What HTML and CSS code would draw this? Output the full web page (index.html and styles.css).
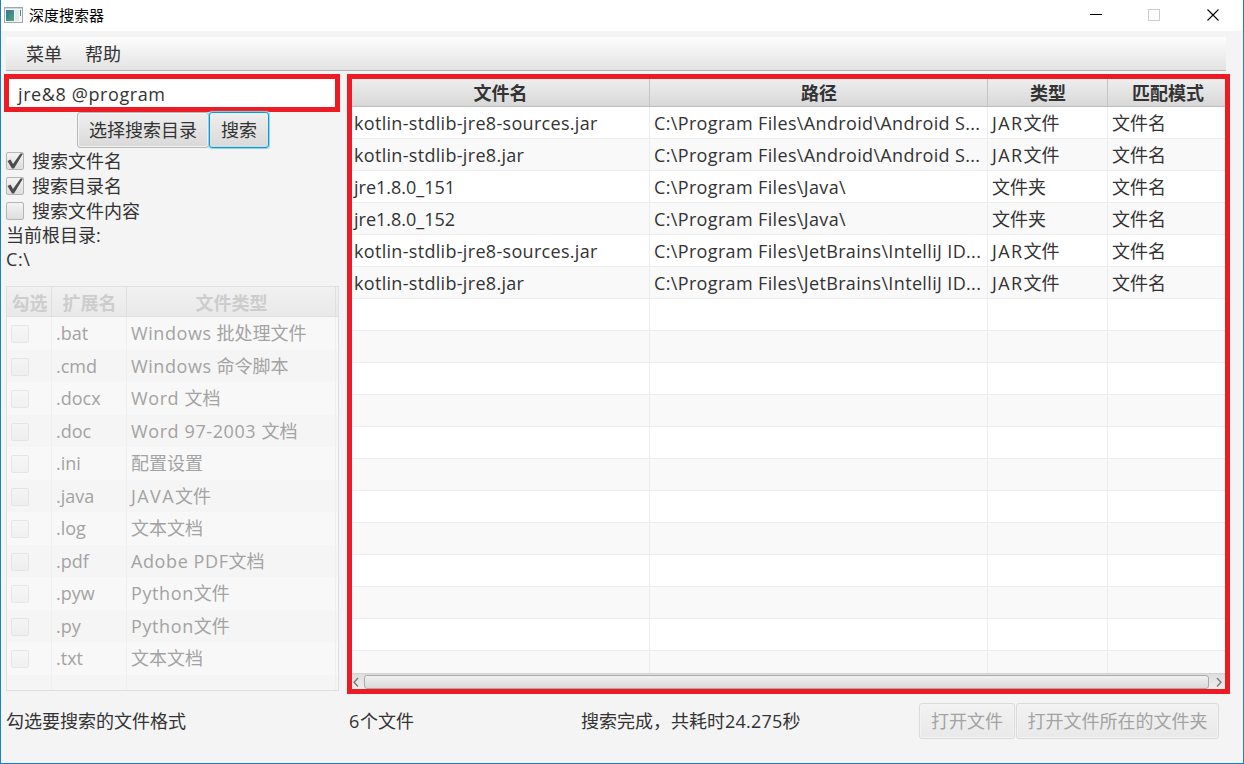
FILE: index.html
```html
<!DOCTYPE html>
<html lang="zh-CN">
<head>
<meta charset="utf-8">
<title>深度搜索器</title>
<link rel="stylesheet" href="styles.css">
</head>
<body>
<div class="window">
  <header class="titlebar">
    <svg class="app-icon" width="19" height="16" viewBox="0 0 19 16">
      <defs><linearGradient id="g" x1="0" y1="0" x2="1" y2="1"><stop offset="0" stop-color="#3c6f9c"/><stop offset="1" stop-color="#49ac78"/></linearGradient></defs>
      <rect x=".5" y=".5" width="18" height="15" fill="#f6f8f8" stroke="#a3a8ae"/>
      <path d="M1 1.500h17" stroke="#d5d8dc"/>
      <rect x="2" y="3" width="8" height="11" fill="url(#g)"/>
      <rect x="11" y="3" width="4" height="11" fill="#e3ebec"/>
      <rect x="16" y="3" width="1" height="6" fill="#4a8c9c"/>
    </svg>
    <span class="title">深度搜索器</span>
    <svg class="controls" width="132" height="14" viewBox="0 0 132 14" fill="none">
      <path d="M0 6.500h12" stroke="#000"/>
      <rect x="58.500" y="1.500" width="11" height="11" stroke="#ccc"/>
      <path d="M117.500 1.500l11 11M128.500 1.500l-11 11" stroke="#000" stroke-width="1.100"/>
    </svg>
  </header>
  <nav class="menubar"><span>菜单</span><span>帮助</span></nav>
  <main class="content">
    <section class="side">
      <div class="search">jre&amp;8 @program</div>
      <div class="actions"><button class="btn pick">选择搜索目录</button><button class="btn focus">搜索</button></div>
      <div class="checks">
        <div class="check"><i class="box"><svg width="18" height="18" viewBox="0 0 18 18"><path d="M1.500 9l3-1.500 2.500 4.500L14.500 1.500h2.500L8 16.500H6z" fill="#4d4d4d"/></svg></i>搜索文件名</div>
        <div class="check"><i class="box"><svg width="18" height="18" viewBox="0 0 18 18"><path d="M1.500 9l3-1.500 2.500 4.500L14.500 1.500h2.500L8 16.500H6z" fill="#4d4d4d"/></svg></i>搜索目录名</div>
        <div class="check"><i class="box"></i>搜索文件内容</div>
      </div>
      <div class="root">当前根目录:</div>
      <div class="root drive">C:\</div>
      <div class="types">
        <div class="trow thead"><b>勾选</b><b>扩展名</b><b>文件类型</b><b></b></div>
        <div class="trow"><span><i class="box"></i></span><span>.bat</span><span><em>Windows</em> 批处理文件</span></div>
        <div class="trow"><span><i class="box"></i></span><span>.cmd</span><span><em>Windows</em> 命令脚本</span></div>
        <div class="trow"><span><i class="box"></i></span><span>.docx</span><span><em>Word </em>文档</span></div>
        <div class="trow"><span><i class="box"></i></span><span>.doc</span><span><em>Word 97-2003 </em>文档</span></div>
        <div class="trow"><span><i class="box"></i></span><span>.ini</span><span>配置设置</span></div>
        <div class="trow"><span><i class="box"></i></span><span>.java</span><span><em class="caps">JAVA</em>文件</span></div>
        <div class="trow"><span><i class="box"></i></span><span>.log</span><span>文本文档</span></div>
        <div class="trow"><span><i class="box"></i></span><span>.pdf</span><span><em>Adobe PDF</em>文档</span></div>
        <div class="trow"><span><i class="box"></i></span><span>.pyw</span><span><em>Python</em>文件</span></div>
        <div class="trow"><span><i class="box"></i></span><span>.py</span><span><em>Python</em>文件</span></div>
        <div class="trow"><span><i class="box"></i></span><span>.txt</span><span>文本文档</span></div>
        <div class="trow"><span></span><span></span><span></span></div>
      </div>
    </section>
    <section class="results">
      <div class="rrow rhead"><b>文件名</b><b>路径</b><b>类型</b><b>匹配模式</b></div>
      <div class="rbody">
        <div class="rrow"><span class="name">kotlin-stdlib-jre8-sources.jar</span><span class="path">C:\Program Files\Android\Android S...</span><span><em class="caps">JAR</em>文件</span><span>文件名</span></div>
        <div class="rrow"><span class="name">kotlin-stdlib-jre8.jar</span><span class="path">C:\Program Files\Android\Android S...</span><span><em class="caps">JAR</em>文件</span><span>文件名</span></div>
        <div class="rrow"><span>jre1.8.0_151</span><span class="path">C:\Program Files\Java\</span><span>文件夹</span><span>文件名</span></div>
        <div class="rrow"><span>jre1.8.0_152</span><span class="path">C:\Program Files\Java\</span><span>文件夹</span><span>文件名</span></div>
        <div class="rrow"><span class="name">kotlin-stdlib-jre8-sources.jar</span><span class="path">C:\Program Files\JetBrains\IntelliJ ID...</span><span><em class="caps">JAR</em>文件</span><span>文件名</span></div>
        <div class="rrow"><span class="name">kotlin-stdlib-jre8.jar</span><span class="path">C:\Program Files\JetBrains\IntelliJ ID...</span><span><em class="caps">JAR</em>文件</span><span>文件名</span></div>
        <div class="rrow"><span></span><span></span><span></span><span></span></div>
        <div class="rrow"><span></span><span></span><span></span><span></span></div>
        <div class="rrow"><span></span><span></span><span></span><span></span></div>
        <div class="rrow"><span></span><span></span><span></span><span></span></div>
        <div class="rrow"><span></span><span></span><span></span><span></span></div>
        <div class="rrow"><span></span><span></span><span></span><span></span></div>
        <div class="rrow"><span></span><span></span><span></span><span></span></div>
        <div class="rrow"><span></span><span></span><span></span><span></span></div>
        <div class="rrow"><span></span><span></span><span></span><span></span></div>
        <div class="rrow"><span></span><span></span><span></span><span></span></div>
        <div class="rrow"><span></span><span></span><span></span><span></span></div>
        <div class="rrow"><span></span><span></span><span></span><span></span></div>
      </div>
      <div class="scroll">
        <svg width="12" height="16" viewBox="0 0 12 16"><path d="M6 4L2 8.200 6 12.500" fill="none" stroke="#777" stroke-width="1.300"/></svg>
        <div class="thumb"></div>
        <svg width="16" height="16" viewBox="0 0 16 16"><path d="M8 4L12 8.200 8 12.500" fill="none" stroke="#777" stroke-width="1.300"/></svg>
      </div>
    </section>
  </main>
  <footer class="status">
    <span class="hint">勾选要搜索的文件格式</span>
    <span class="count"><em>6</em>个文件</span>
    <span class="message">搜索完成，共耗时<em class="time">24.275</em>秒</span>
    <button class="btn off open">打开文件</button><button class="btn off folder">打开文件所在的文件夹</button>
  </footer>
</div>
</body>
</html>
```
FILE: styles.css
```css
* { box-sizing: border-box; }
body { margin: 0; font: 18px/24px "Open Sans", "Noto Sans CJK SC", sans-serif; color: #333; }
em { font-style: normal; letter-spacing: .6px; }
.caps { letter-spacing: 1.4px; }
.time { letter-spacing: .2px; }
.window { width: 1244px; height: 764px; background: #f4f4f4; border: 1px solid #1a7fd0; border-top: 0; overflow: hidden; white-space: nowrap; }
.titlebar { height: 31px; background: #fff; display: flex; align-items: center; color: #000; font-size: 15px; }
.app-icon { margin-left: 3px; margin-top: -1px; }
.title { margin-left: 6px; margin-top: -2px; }
.controls { margin-left: auto; margin-right: 21px; margin-top: -1px; }
.menubar { height: 34px; margin: 6px 17px 0 5px; padding: 0 20px; display: flex; align-items: center; gap: 23px; background: linear-gradient(#fdfdfd, #e3e3e3); border-bottom: 1px solid #b5b5b5; }
.content { display: flex; gap: 7px; margin: 3px 13px 0 3px; height: 620px; }
.side { width: 336px; flex: none; display: flex; flex-direction: column; }
.search { height: 38px; border: 5px solid #ed1c24; background: #fff; padding: 3px 9px; line-height: 24px; letter-spacing: .6px; }
.actions { display: flex; height: 36px; margin-left: 73px; }
.btn { font: inherit; color: inherit; height: 36px; padding: 0; border: 1px solid #b8b8b8; border-radius: 3px; background: linear-gradient(#efefef, #d9d9d9); box-shadow: inset 0 0 0 1px #f3f3f3; }
.pick { width: 132px; }
.focus { width: 60px; border-color: #039ed3; box-shadow: 0 0 1px 1px #8ed2ea; }
.check { height: 25px; display: flex; align-items: center; gap: 8px; padding-left: 2px; }
.box { display: block; width: 18px; height: 18px; border: 1px solid #b5b5b5; border-radius: 2px; background: linear-gradient(#f3f3f3, #dedede); }
.box svg { display: block; margin: -1px; }
.root { height: 24px; padding-left: 2px; }
.drive { letter-spacing: .6px; }
.types { height: 405px; width: 333px; margin: 15px 0 0 2px; border: 1px solid #dfdfdf; background: #f8f8f8; overflow: hidden; color: #a3a3a3; }
.trow { display: grid; grid-template-columns: 45px 75px 1fr 2px; height: 32.5px; align-items: stretch; }
.trow:nth-child(odd) { background: #f5f5f5; }
.trow > * { border-right: 1px solid #efefef; padding-left: 4px; line-height: 32px; }
.trow .box { margin-top: 8px; opacity: .25; }
.trow.thead { height: 30px; background: linear-gradient(#f1f1f1, #e9e9e9); color: #cdcdcd; border-bottom: 1px solid #dfdfdf; }
.thead > b { padding: 0 0 0 1px; text-align: center; line-height: 32px; border-color: #dfdfdf; }
.thead > b:last-child { border: 0; }
.results { width: 883px; flex: none; border: 5px solid #ed1c24; background: #fff; display: flex; flex-direction: column; }
.rrow { display: grid; grid-template-columns: 298px 338px 120px 117px; height: 32px; border-bottom: 1px solid #ededed; }
.rrow:nth-child(even) { background: #f9f9f9; }
.rrow > * { border-right: 1px solid #ededed; padding-left: 4px; line-height: 32px; }
.rrow > :first-child { padding-left: 2px; }
.rrow > :last-child { border-right: 0; }
.name { letter-spacing: .31px; }
.path { letter-spacing: .35px; }
.rrow.rhead { height: 28px; flex: none; background: linear-gradient(#eee, #d8d8d8); border-color: #bcbcbc; }
.rrow.rhead > b { padding: 0 0 0 1px; text-align: center; line-height: 28px; border-color: #c4c4c4; }
.rrow.rhead > b:first-child { padding: 0; }
.rrow.rhead > b:last-child { padding-left: 3px; }
.rbody { height: 566px; overflow: hidden; }
.scroll { height: 16px; display: flex; border-top: 1px solid #d3d3d3; background: linear-gradient(#dedede, #eee); }
.thumb { flex: 1; height: 14px; margin-top: 1px; border: 1px solid #aaa; border-radius: 3px; background: linear-gradient(#f1f1f1, #dadada); }
.status { display: flex; height: 36px; margin: 9px 24px 0 5px; align-items: center; }
.hint { width: 343px; }
.count { width: 232px; }
.message { flex: 1; }
.off { color: #a3a3a3; border-color: #dadada; background: linear-gradient(#f2f2f2, #e9e9e9); }
.open { width: 96px; margin-right: 1px; }
.folder { width: 203px; }
```
